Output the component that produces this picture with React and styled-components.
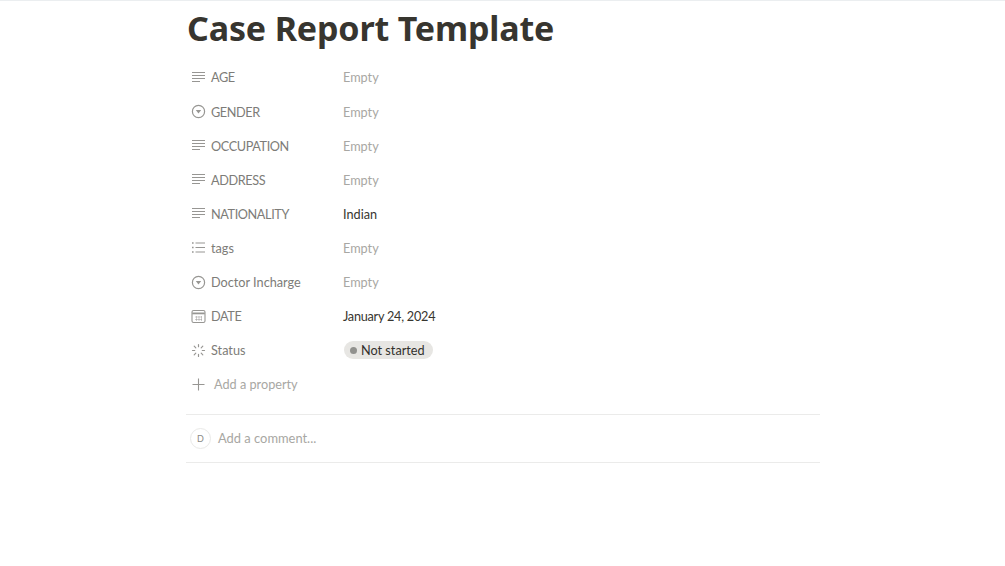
import React from "react";
import styled, { createGlobalStyle } from "styled-components";

const Global = createGlobalStyle`
  html, body { margin: 0; padding: 0; background: #fff; }
  body { font-family: "Lato", "Noto Sans", sans-serif; overflow: hidden; }
`;
const Page = styled.div`
  height: 566px;
  box-sizing: border-box;
  border-top: 1px solid #ebeef0;
  padding-left: 186px;
`;
const Content = styled.main`
  width: 634px;
  display: flex;
  flex-direction: column;
`;
const Title = styled.h1`
  margin: 0 0 0 1px;
  height: 59.4px;
  line-height: 54px;
  font-family: "Noto Sans", sans-serif;
  font-size: 34px;
  font-weight: 700;
  letter-spacing: -0.15px;
  color: #37352f;
  white-space: nowrap;
`;
const Properties = styled.div`
  display: flex;
  flex-direction: column;
`;
const Row = styled.div`
  height: 34.1px;
  display: grid;
  grid-template-columns: 157px 1fr;
  align-items: center;
  font-size: 12.7px;
`;
const Label = styled.div`
  display: flex;
  align-items: center;
  gap: 5px;
  padding-left: 5px;
  color: #7d7c78;
  white-space: nowrap;
  letter-spacing: ${p => (p.$caps ? "-0.4px" : "0")};
`;
const IconBox = styled.svg`
  width: 15px;
  height: 15px;
  flex: none;
  color: #979693;
`;
const Value = styled.div`
  color: ${p => (p.$empty ? "#a8a7a3" : "#37352f")};
  white-space: nowrap;
  letter-spacing: ${p => (p.$tight ? "-0.25px" : "0")};
`;
const Pill = styled.span`
  display: inline-flex;
  align-items: center;
  gap: 4px;
  height: 18px;
  margin-left: 1px;
  padding: 0 8px 0 6px;
  border-radius: 9px;
  background: #e7e6e3;
  color: #32302c;
`;
const Dot = styled.span`
  width: 7px;
  height: 7px;
  border-radius: 50%;
  background: #91918e;
`;
const AddProperty = styled(Label)`
  color: #a8a7a3;
  gap: 8px;
`;
const Comment = styled.div`
  margin-top: 12.6px;
  height: 47px;
  border-top: 1px solid #ebebea;
  border-bottom: 1px solid #ebebea;
  display: flex;
  align-items: center;
  gap: 7px;
  padding-left: 4px;
  font-size: 12.9px;
  color: #a8a7a3;
`;
const Avatar = styled.div`
  width: 21px;
  height: 21px;
  box-sizing: border-box;
  border: 1px solid #e9e9e7;
  border-radius: 50%;
  display: flex;
  align-items: center;
  justify-content: center;
  font-size: 9px;
  color: #8a8985;
`;

const TextIcon = () => (
  <IconBox viewBox="0 0 15 15" fill="none" stroke="currentColor" strokeWidth="1">
    <path d="M1 2.5h13M1 5.5h13M1 8.5h13M1 11.5h8" />
  </IconBox>
);
const SelectIcon = () => (
  <IconBox viewBox="0 0 15 15" fill="none" stroke="currentColor" strokeWidth="1.2">
    <circle cx="7.5" cy="7.5" r="6.1" />
    <path d="M4.8 6h5.4L7.5 9.6z" fill="currentColor" stroke="none" />
  </IconBox>
);
const ListIcon = () => (
  <IconBox viewBox="0 0 15 15" fill="none" stroke="currentColor" strokeWidth="1">
    <path d="M4.5 3h9.5M4.5 7.5h9.5M4.5 12h9.5" />
    <path d="M1 3h1.6M1 7.5h1.6M1 12h1.6" strokeWidth="1.4" />
  </IconBox>
);
const DateIcon = () => (
  <IconBox viewBox="0 0 15 15" fill="none">
    <rect x="1" y="1.5" width="13" height="12" rx="1.6" stroke="currentColor" strokeWidth="1.1" />
    <path d="M1.2 4.4h12.6" stroke="currentColor" strokeWidth="1.8" />
    <path d="M4 8h7M4 10.5h7M5.5 7v5M8 7v5M10.5 7v5" stroke="currentColor" strokeWidth=".8" opacity=".6" />
  </IconBox>
);
const StatusIcon = () => (
  <IconBox viewBox="0 0 15 15" fill="none" stroke="currentColor" strokeWidth="1.2" strokeLinecap="round">
    <path d="M7.5 1.5v2.2M7.5 11.3v2.2M1.5 7.5h2.2M11.3 7.5h2.2M3.2 3.2l1.6 1.6M10.2 10.2l1.6 1.6M3.2 11.8l1.6-1.6M10.2 4.8l1.6-1.6" />
  </IconBox>
);
const PlusIcon = () => (
  <IconBox viewBox="0 0 15 15" fill="none" stroke="currentColor" strokeWidth="1.1">
    <path d="M7.5 1.5v12M1.5 7.5h12" />
  </IconBox>
);

const rows = [
  ["AGE", TextIcon, "Empty", true],
  ["GENDER", SelectIcon, "Empty", true],
  ["OCCUPATION", TextIcon, "Empty", true],
  ["ADDRESS", TextIcon, "Empty", true],
  ["NATIONALITY", TextIcon, "Indian", true],
  ["tags", ListIcon, "Empty", false],
  ["Doctor Incharge", SelectIcon, "Empty", false],
  ["DATE", DateIcon, "January 24, 2024", true],
];

export default function App() {
  return (
    <Page>
      <Global />
      <Content>
        <Title>Case Report Template</Title>
        <Properties>
          {rows.map(([name, Icon, value, caps]) => (
            <Row key={name}>
              <Label $caps={caps}><Icon />{name}</Label>
              <Value $empty={value === "Empty"} $tight={value.length > 6}>{value}</Value>
            </Row>
          ))}
          <Row>
            <Label><StatusIcon />Status</Label>
            <Value><Pill><Dot />Not started</Pill></Value>
          </Row>
          <Row>
            <AddProperty><PlusIcon />Add a property</AddProperty>
          </Row>
        </Properties>
        <Comment>
          <Avatar>D</Avatar>
          Add a comment...
        </Comment>
      </Content>
    </Page>
  );
}
